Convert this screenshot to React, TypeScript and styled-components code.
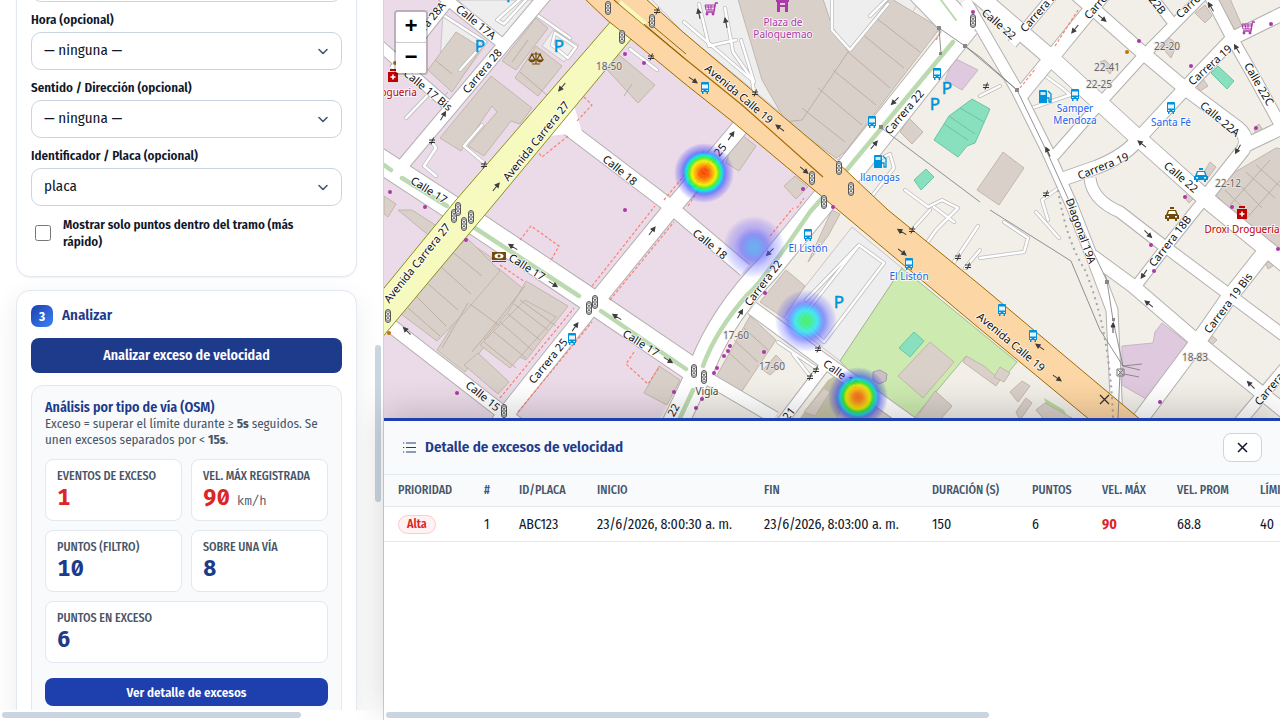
import React, { useState } from 'react';
import styled, { createGlobalStyle } from 'styled-components';

const SANS = '"Fira Sans Condensed", Lato, "Noto Sans", sans-serif';
const MONO = '"Fira Code", "Fira Mono", "DejaVu Sans Mono", "Liberation Mono", monospace';

const GlobalStyle = createGlobalStyle`
  *, *::before, *::after { box-sizing: border-box; }
  body { margin: 0; font-family: ${SANS}; color: #0f172a; background: #fff; overflow: hidden; }
  button, select, input { font-family: inherit; }
`;

/* ---------- Shell ---------- */
const Shell = styled.div`
  display: grid;
  grid-template-columns: 30% minmax(0, 1fr);
  height: 100vh;
`;
const Sidebar = styled.aside`
  display: grid;
  grid-template-columns: minmax(0, 1fr) 10px;
  grid-template-rows: minmax(0, 1fr) 10px;
  min-height: 0;
  border-right: 1px solid #cbd5e1;
`;
const SidebarScroll = styled.div`
  grid-area: 1 / 1 / 2 / 3;
  min-height: 0;
  overflow: hidden;
  padding: 0 26px 0 16px;
  display: flex;
  flex-direction: column;
  gap: 13px;
`;
const VTrack = styled.div`
  grid-area: 1 / 2 / 2 / 3;
  z-index: 1;
  padding: 345px 2px 0;
`;
const HTrack = styled.div`
  grid-area: 2 / 1 / 3 / 3;
  padding: 2px;
`;
const Thumb = styled.div<{ $w?: string; $h: string }>`
  width: ${(p) => p.$w ?? '100%'};
  height: ${(p) => p.$h};
  border-radius: 3px;
  background: #cbd5e1;
`;

/* ---------- Cards and form ---------- */
const Card = styled.section<{ $scrolled?: boolean }>`
  flex: none;
  margin-top: ${(p) => (p.$scrolled ? '-51px' : '0')};
  padding: 14px;
  border: 1px solid #e2e8f0;
  border-radius: 14px;
  background: #fff;
  box-shadow: ${(p) => (p.$scrolled ? '0 1px 2px rgba(15, 23, 42, 0.05)' : '0 8px 28px rgba(15, 23, 42, 0.08)')};
`;
const Field = styled.div`
  display: flex;
  flex-direction: column;
  gap: 4px;
  margin-bottom: 10px;
`;
const FieldLabel = styled.label`
  font-size: 13px;
  font-weight: 600;
  line-height: 16px;
`;
const SelectBox = styled.div`
  display: grid;
  align-items: center;
  & > * { grid-area: 1 / 1; }
  svg { justify-self: end; margin-right: 13px; pointer-events: none; }
`;
const Select = styled.select`
  appearance: none;
  width: 100%;
  height: 38px;
  padding: 0 34px 2px 12px;
  border: 1px solid #cbd5e1;
  border-radius: 10px;
  background: #fff;
  color: #0f172a;
  font-size: 15px;
`;
const CheckRow = styled.label`
  display: flex;
  align-items: center;
  gap: 12px;
  padding: 0 12px 12px 4px;
  font-size: 13px;
  font-weight: 600;
  line-height: 17px;
`;
const Checkbox = styled.input`
  flex: none;
  width: 16px;
  height: 16px;
  margin: 0;
`;
const StepHeader = styled.header`
  display: flex;
  align-items: center;
  gap: 9px;
  margin-bottom: 11px;
`;
const StepBadge = styled.span`
  display: grid;
  place-items: center;
  width: 22px;
  height: 22px;
  border-radius: 7px;
  background: linear-gradient(135deg, #1e40af, #3b82f6);
  color: #fff;
  font-size: 13px;
  font-weight: 700;
`;
const StepTitle = styled.h2`
  margin: 0;
  padding-bottom: 2px;
  color: #1e3a8a;
  font-size: 15px;
  font-weight: 600;
  line-height: 20px;
`;
const PrimaryButton = styled.button<{ $small?: boolean }>`
  display: block;
  width: 100%;
  height: ${(p) => (p.$small ? '28px' : '35px')};
  padding: 0;
  border: 0;
  border-radius: 8px;
  background: ${(p) => (p.$small ? '#1e40af' : '#1e3a8a')};
  color: #fff;
  font-size: ${(p) => (p.$small ? '13px' : '14px')};
  font-weight: 600;
`;

/* ---------- Analysis ---------- */
const Analysis = styled.div`
  margin-top: 12px;
  padding: 13px 13px 24px;
  border: 1px solid #e2e8f0;
  border-radius: 12px;
  background: #f8fafc;
`;
const AnalysisTitle = styled.h3`
  margin: 0;
  color: #1e3a8a;
  font-size: 14px;
  font-weight: 600;
  line-height: 17px;
`;
const AnalysisText = styled.p`
  margin: 0 0 11px;
  color: #475569;
  font-size: 13px;
  line-height: 16px;
`;
const Stats = styled.dl`
  display: grid;
  grid-template-columns: 1fr 1fr;
  gap: 9px;
  margin: 0 0 15px;
`;
const Stat = styled.div<{ $wide?: boolean }>`
  grid-column: ${(p) => (p.$wide ? '1 / -1' : 'auto')};
  height: 62px;
  padding: 8px 11px;
  border: 1px solid #e2e8f0;
  border-radius: 8px;
  background: #fff;
`;
const StatName = styled.dt`
  color: #475569;
  font-size: 12px;
  font-weight: 500;
  line-height: 16px;
  white-space: nowrap;
`;
const StatValue = styled.dd<{ $alert?: boolean }>`
  margin: 0;
  color: ${(p) => (p.$alert ? '#dc2626' : '#1e3a8a')};
  font-family: ${MONO};
  font-size: 22px;
  font-weight: 700;
  line-height: 29px;
`;
const Unit = styled.small`
  margin-left: 7px;
  color: #475569;
  font-size: 12px;
  font-weight: 400;
`;

/* ---------- Map ---------- */
const Main = styled.main`
  display: grid;
  grid-template-columns: minmax(0, 1fr);
  grid-template-rows: minmax(0, 1fr) 302px;
  min-width: 0;
  min-height: 0;
`;
const MapPane = styled.div`
  position: relative;
  overflow: hidden;
  background: #f2efe9;
`;
const MapSvg = styled.svg`
  display: block;
  width: 100%;
  height: 100%;
  font-family: "Noto Sans", sans-serif;
`;
const ZoomControl = styled.div`
  position: absolute;
  top: 10px;
  left: 10px;
  display: flex;
  flex-direction: column;
  border: 2px solid rgba(0, 0, 0, 0.2);
  border-radius: 4px;
  background-clip: padding-box;
`;
const ZoomButton = styled.button`
  width: 30px;
  height: 30px;
  padding: 2px 0 0;
  border: 0;
  border-radius: 2px;
  background: #fff;
  color: #000;
  font: bold 22px/28px "Liberation Mono", monospace;
  & + & { height: 31px; border-top: 1px solid #ccc; border-radius: 0 0 2px 2px; }
`;

/* ---------- Detail panel ---------- */
const Panel = styled.section`
  position: relative;
  z-index: 2;
  display: flex;
  flex-direction: column;
  min-width: 0;
  border-top: 3px solid #1e40af;
  background: #fff;
  box-shadow: 0 -8px 32px rgba(0, 0, 0, 0.18);
`;
const PanelHeader = styled.header`
  display: flex;
  align-items: center;
  gap: 8px;
  height: 54px;
  flex: none;
  padding: 0 18px;
  border-bottom: 1px solid #e2e8f0;
  background: #f8fafc;
  color: #1e3a8a;
`;
const PanelTitle = styled.h2`
  flex: 1;
  margin: 0;
  padding-bottom: 2px;
  font-size: 15px;
  font-weight: 600;
`;
const CloseButton = styled.button`
  display: grid;
  place-items: center;
  width: 39px;
  height: 29px;
  padding: 0;
  border: 1px solid #cbd5e1;
  border-radius: 8px;
  background: #fff;
  color: #0f172a;
`;
const TableScroll = styled.div`
  flex: 1;
  min-height: 0;
  overflow: hidden;
`;
const Table = styled.table`
  table-layout: fixed;
  width: 1333px;
  border-collapse: separate;
  border-spacing: 0;
  text-align: left;
  white-space: nowrap;
`;
const Th = styled.th<{ $w?: number }>`
  width: ${(p) => (p.$w ? p.$w + 'px' : 'auto')};
  height: 32px;
  padding: 0 0 1px 14px;
  border-bottom: 1px solid #e2e8f0;
  background: #f8fafc;
  color: #475569;
  font-size: 12px;
  font-weight: 500;
`;
const Td = styled.td<{ $alert?: boolean }>`
  height: 35px;
  padding: 0 0 0 14px;
  border-bottom: 1px solid #e2e8f0;
  color: ${(p) => (p.$alert ? '#dc2626' : '#0f172a')};
  font-size: 14px;
  font-weight: ${(p) => (p.$alert ? 700 : 400)};
`;
const Pill = styled.span`
  display: inline-block;
  padding: 0 8px;
  border: 1px solid #fecaca;
  border-radius: 10px;
  background: #fef2f2;
  color: #dc2626;
  font-size: 12px;
  font-weight: 600;
  line-height: 17px;
`;

/* ---------- Map data ---------- */
type Road = { d: string; w: number };
const roads: Road[] = [
  { d: 'M550-10L402 166', w: 14 },
  { d: 'M440-6L500 42', w: 12 },
  { d: 'M454-6L394 70', w: 12 },
  { d: 'M378 44L451 108', w: 12 },
  { d: 'M376 158L451 207L584 296L693 370', w: 25 },
  { d: 'M693 370L775 418', w: 14 },
  { d: 'M562 124L666 203L745 270', w: 15 },
  { d: 'M752 308L820 358L912 424', w: 15 },
  { d: 'M498 424L592 306L667 214L742 125', w: 18 },
  { d: 'M966 24L845 176', w: 30 },
  { d: 'M832 190L768 268Q722 315 702 367L672 430', w: 27 },
  { d: 'M386 322L520 426', w: 15 },
  { d: 'M826 364L782 422', w: 12 },
  { d: 'M972-10L1050 57L1137 137L1213 205L1290 268', w: 18 },
  { d: 'M920-14L968 36', w: 34 },
  { d: 'M965 0L1017 90L1047 150L1072 206L1092 257L1112 310L1117 420', w: 13 },
  { d: 'M1054-6L1012 44', w: 11 },
  { d: 'M1110-14L1048 62L1020 96', w: 16 },
  { d: 'M1074-8L1143 53L1187 90L1238 128Q1250 138 1243 150L1208 194', w: 15 },
  { d: 'M1212-14L1143 56L1103 100L1054 156', w: 12 },
  { d: 'M1144-14L1172 22', w: 11 },
  { d: 'M1286 12L1233 38L1193 80L1140 137Q1127 155 1097 167L1060 180', w: 15 },
  { d: 'M1208-8L1233 40L1257 82L1282 128', w: 13 },
  { d: 'M1244 146L1290 124', w: 15 },
  { d: 'M1210 192L1170 242L1133 290', w: 12 },
  { d: 'M1090 178Q1092 200 1120 212L1160 243L1227 293L1290 340', w: 13 },
  { d: 'M1092 256L1133 286L1197 341L1290 416', w: 15 },
  { d: 'M1268 248L1227 300L1197 343L1138 422', w: 17 },
  { d: 'M1290 362L1238 424', w: 13 },
];
/* Driveways and service lanes */
const lanes = [
  'M406 118L428 95', 'M537 15L570 38M555 33L576 47L568 58L552 45Z', 'M432 142L436 148L424 166L436 176',
  'M482 125L464 146L483 162', 'M497 20L526-6M504 24L544-20M497 20L504 24',
  'M443 15L485 42L460 70', 'M630 49L657 70', 'M684 22L752 80L754 92', 'M699 4L709 46L736 40M725 8L733 52L754 82M741 40L754 82',
  'M832 0L832 30L850 50L888 4', 'M870 16L896-10',
  'M806 300L859 245L884 263L824 342L800 320L859 245', 'M778 342L819 370M793 354L810 376', 'M872 196L894 168L890 154L878 160', 
  'M905 190L928 207L942 200L958 208L936 230L915 260', 'M934 207L954 222', 'M1044 75L1062 88L1070 95L1032 108', 'M1000 86L980 96',
  'M1036 212L1059 238M980 258L1024 252L1028 238L1004 222', 'M912 230L930 210M954 262L978 226M965 268L980 250', 'M1064 184L1042 200L1048 220',
];
const footways = [
  'M584 97L592 105L576 122M568 136L542 157L538 152', 'M664 200L705 150', 'M520 240L531 226L559 246L550 262', 'M500 265L525 282',
  'M592 286L655 206', 'M610 300L674 222', 'M500 398L574 308', 'M518 412L592 322', 'M634 352L626 364L648 384L660 366', 'M688 206L714 166', 'M770 236L793 208',
  'M936 40L940 34', 'M1055 46L1078 10', 'M1020 88L1036 68', 'M797 208L804 198',
];
/* Building footprints */
const buildings = [
  'M536 18L548 28L516 70L502 61Z', 'M536 46L562 66L538 96L515 78Z', 'M456 32L482 48L452 92L428 70Z', 'M491 76L532 108L520 124L511 121L484 156L468 146L497 112L492 106L461 151L440 138Z',
  'M600 62L618 54L655 85L638 103Z', 'M737-4L822-4L832 26L848 52L890-2L940 28L845 152L836 158L786 122L762 80Z', 'M732 144L742 135L756 146L739 171L726 163Z', 'M784 186L795 176L808 187L796 199Z', 'M900 132L909 118L923 132L912 144Z',
  'M466 240L492 258L482 268L459 248ZM486 275L498 268L526 291L509 314L465 372L437 350L467 303Z', 'M467 238L500 271L465 312L437 341L401 314L455 250Z', 'M526 281L568 306L526 360L484 340L508 312Z', 'M480 345L525 300L556 317L510 368Z', 'M464 365L478 353L509 382L498 394Z', 'M398 210L412 210L440 228L432 238Z', 'M384 196L396 204L388 217L384 214Z',
  'M659 366L680 380L667 405L644 393Z', 'M786 270L805 286L784 318L760 302Z', 'M750 316L776 340L740 394L716 377Z', 'M776 355L784 363L770 375L763 370Z', 'M808 262L828 236L840 214L832 210Z', 'M898 376L930 342L954 362L923 398Z', 'M916 418L935 391L952 406L940 420Z', 'M804 412L824 388L830 392L815 416Z', 'M837 418L852 385L892 414L888 424Z', 'M966 356L984 366L1000 380L996 386L963 362Z', 'M1000 367L1010 373L1004 382L994 377Z', 'M1003 152L1024 168L999 205L977 190Z', 'M1165 35L1177 44L1171 58L1160 45Z', 'M1195 13L1205 5L1212 16L1205 23Z', 'M1218 0L1228-6L1242 26L1235 30Z', 'M1215 193L1230 175L1276 148L1290 150L1290 248L1278 250L1225 205Z', 'M1202 175L1210 162L1216 167L1208 178Z', 'M1010 392L1022 381L1030 386L1018 402Z', 'M1036 410L1045 403L1072 418L1048 424Z', 'M1016 412L1026 398L1032 403L1020 420Z', 'M1206 340L1211 335L1217 340L1211 346Z', 'M1264 260L1272 258L1276 264L1268 269Z', 'M1100 62L1105 60L1113 68L1110 74Z', 'M1184 197L1188 193L1194 198L1189 203Z', 'M1254 128L1259 124L1264 132L1256 136Z', 'M1196 84L1203 79L1208 86L1200 91Z',
];
const buildingLines = 'M435 60L452 74M448 92L437 103M450 250L482 276M440 266L471 294M426 282L458 310M416 296L446 326M408 308L440 336M470 304L500 326M442 348L468 303M525 286L500 318L472 352M520 300L556 326M514 304L548 330M508 314L540 340M500 322L532 350M494 332L526 358M484 342L516 368M802 120L848 52M833 70L876 105M818 88L862 125M802 108L845 142M848 52L890 88M862 34L904 68M876 18L920 52M765 124L802 120M744 328L768 350M734 340L758 362M726 350L750 372M1225 190L1250 215M1235 180L1262 208M1246 172L1275 198M1256 165L1282 188M1230 205L1270 160M1245 220L1285 175M624 96L632 84M512 62L528 40M520 72L548 96';

type Label = { x: number; y: number; r: number; t: string };
const streetLabels: Label[] = [
  { x: 536, y: 141, r: -51, t: 'Avenida Carrera 27' }, { x: 417, y: 263, r: -51, t: 'Avenida Carrera 27' },
  { x: 739, y: 94, r: 40, t: 'Avenida Calle 19' }, { x: 1011, y: 342, r: 40, t: 'Avenida Calle 19' },
  { x: 476, y: 22, r: 39, t: 'Calle 17A' }, { x: 428, y: 90, r: 39, t: 'Calle 17 Bis' },
  { x: 424, y: 27, r: -51, t: 'Carrera 28A' }, { x: 482, y: 71, r: -50, t: 'Carrera 28' },
  { x: 429, y: 190, r: 32, t: 'Calle 17' }, { x: 527, y: 267, r: 32, t: 'Calle 17' }, { x: 641, y: 343, r: 32, t: 'Calle 17' },
  { x: 620, y: 170, r: 39, t: 'Calle 18' }, { x: 710, y: 244, r: 39, t: 'Calle 18' }, { x: 841, y: 374, r: 36, t: 'Calle 18' },
  { x: 707, y: 166, r: -51, t: 'Carrera 25' }, { x: 548, y: 361, r: -51, t: 'Carrera 25' },
  { x: 904, y: 112, r: -50, t: 'Carrera 22' }, { x: 763, y: 283, r: -53, t: 'Carrera 22' },
  { x: 483, y: 396, r: 39, t: 'Calle 15' }, { x: 663, y: 428, r: -60, t: 'Carrera 22' }, { x: 776, y: 430, r: -52, t: 'Carrera 21' },
  { x: 999, y: 24, r: 41, t: 'Calle 22' }, { x: 1181, y: 177, r: 41, t: 'Calle 22' }, { x: 1220, y: 119, r: 40, t: 'Calle 22A' },
  { x: 1259, y: 84, r: 60, t: 'Calle 22C' }, { x: 1149, y: -6, r: 52, t: 'Calle 22B' },
  { x: 1103, y: 166, r: -22, t: 'Carrera 19' }, { x: 1210, y: 65, r: -42, t: 'Carrera 19' },
  { x: 1040, y: 10, r: -49, t: 'Carrera 21' }, { x: 1104, y: -3, r: -49, t: 'Carrera 20' }, { x: 1200, y: -5, r: -43, t: 'Carrera 19A' },
  { x: 1081, y: 231, r: 70, t: 'Diagonal 19A' }, { x: 1170, y: 241, r: -52, t: 'Carrera 18B' }, { x: 1228, y: 303, r: -53, t: 'Carrera 19 Bis' },
  { x: 1274, y: 383, r: -50, t: 'Carrera 18' },
];
const houseNumbers: Label[] = [
  { x: 609, y: 66, r: 0, t: '18-50' }, { x: 1167, y: 46, r: 0, t: '22-20' }, { x: 1107, y: 67, r: 0, t: '22-41' }, { x: 1099, y: 84, r: 0, t: '22-25' },
  { x: 1228, y: 183, r: 0, t: '22-12' }, { x: 736, y: 335, r: 0, t: '17-60' }, { x: 772, y: 366, r: 0, t: '17-60' }, { x: 1195, y: 357, r: 0, t: '18-83' },
];
const arrows: [number, number, number][] = [
  [562, 87, 130], [496, 187, -51], [443, 116, -60], [513, 247, 212], [553, 284, 32], [617, 317, 212], [668, 360, 32], [693, 80, 35], [780, 128, 217], [804, 170, 40],
  [731, 136, -55], [895, 101, 135], [874, 145, -50], [407, 331, 225], [575, 327, -55], [652, 231, -52], [770, 252, 135], [740, 314, -60], [902, 232, 212], [902, 252, 38],
  [1075, 29, 130], [1102, 18, 40], [1211, 7, 240], [1237, 49, 240], [1142, 144, 218], [1238, 149, 120], [1048, 152, 245], [1148, 234, 45], [1144, 274, 125], [1149, 304, 218], [1113, 328, 270],
  [1040, 347, 215], [1057, 378, 35], [1251, 385, 225], [699, 14, 258], [726, 23, 258],
];
const signals: [number, number][] = [
  [608, 8], [652, 21], [622, 37], [454, 216], [464, 224], [471, 217], [388, 316], [589, 308], [595, 302], [504, 411], [812, 178], [839, 168], [851, 189], [824, 202], [973, 21], [694, 371], [704, 377], [458, 209],
];
const buses: [number, number][] = [
  [705, 88], [872, 122], [937, 74], [1075, 95], [1171, 108], [808, 235], [909, 264], [1002, 310], [1033, 336], [572, 339],
];
const gates: [number, number][] = [
  [432, 141], [484, 165], [657, 11], [651, 57], [755, 93], [912, 230], [958, 257], [968, 266], [986, 86], [1046, 194], [818, 349], [816, 370], [810, 377],
];
const shops: [number, number][] = [
  [625, 54], [644, 63], [390, 192], [425, 207], [625, 210], [466, 240], [457, 393], [674, 392], [803, 189], [833, 207], [765, 293], [764, 352], [730, 346], [728, 351], [724, 356], [717, 368], [714, 373], [702, 399], [696, 408],
  [973, 12], [1139, 41], [1191, 66], [1271, 24], [1256, 128], [1185, 197], [1232, 207], [1151, 245], [1154, 271], [1160, 402], [1278, 249],
];
const parkings: [number, number][] = [[480, 46], [559, 46], [947, 88], [935, 104], [839, 302], [511, -4]];
const poiLabels: Label[] = [
  { x: 880, y: 177, r: 0, t: 'llanogas' }, { x: 1075, y: 108, r: 0, t: 'Samper' }, { x: 1075, y: 120, r: 0, t: 'Mendoza' }, { x: 1171, y: 122, r: 0, t: 'Santa Fé' },
  { x: 808, y: 248, r: 0, t: 'El Listón' }, { x: 909, y: 276, r: 0, t: 'El Listón' },
];
const heat = [
  { x: 704, y: 173, r: 30, level: 'hot' }, { x: 754, y: 247, r: 31, level: 'low' }, { x: 806, y: 321, r: 31, level: 'mid' }, { x: 858, y: 397, r: 30, level: 'warm' },
];

const Halo = ({ items, fill, size = 10, halo = '#fff' }: { items: Label[]; fill: string; size?: number; halo?: string }) => (
  <g fontSize={size} fill={fill} stroke={halo} strokeOpacity={0.75} strokeWidth={2} strokeLinejoin="round" paintOrder="stroke" textAnchor="middle">
    {items.map((l, i) => (
      <text key={i} transform={`translate(${l.x} ${l.y}) rotate(${l.r})`} dy="4">{l.t}</text>
    ))}
  </g>
);

const Cart = ({ x, y }: { x: number; y: number }) => (
  <g transform={`translate(${x} ${y})`} fill="none" stroke="#ac39ac" strokeWidth="1.3">
    <path d="M7-6H4.5L3 3H-5" /><path d="M-6-4H4L3 1H-5ZM-3-4L-2 1M0-4V1M-6-2H4" strokeWidth="1" />
    <circle cx="-4" cy="5" r=".8" /><circle cx="2" cy="5" r=".8" />
  </g>
);
const Pump = ({ x, y }: { x: number; y: number }) => (
  <g transform={`translate(${x} ${y})`}>
    <path d="M-6-6Q-6-7-5-7H1Q2-7 2-6V6H-6Z" fill="#0092da" /><path d="M-4.500-5H.5V-2H-4.500Z" fill="#cde8f5" />
    <path d="M2 1H4V5H6V-3L3-6" fill="none" stroke="#0092da" strokeWidth="1.300" />
  </g>
);
const Pharmacy = ({ x, y }: { x: number; y: number }) => (
  <g transform={`translate(${x} ${y})`}>
    <path d="M-3-7H3V-5H-3ZM-5-4H5V6H-5Z" fill="#bf0000" /><path d="M-2.500 1H2.500M0-1.500V3.500" stroke="#fff" strokeWidth="1.600" />
  </g>
);
const Car = ({ x, y, c }: { x: number; y: number; c: string }) => (
  <g transform={`translate(${x} ${y})`}>
    <path d="M-2-7H2V-5H-2ZM-4-4H4L6 1H7V5H5V7H3V5H-3V7H-5V5H-7V1H-6Z" fill={c} /><path d="M-3-3H3L4 0H-4ZM-5 2H-3V3.500H-5ZM3 2H5V3.500H3Z" fill="#fff" />
  </g>
);

function CityMap() {
  return (
    <MapSvg viewBox="384 0 896 418" preserveAspectRatio="xMinYMin slice" role="img" aria-label="Mapa de calor de excesos de velocidad">
      <defs>
        <radialGradient id="hot">
          <stop offset="0" stopColor="#ff4000" /><stop offset=".15" stopColor="#ff5a00" /><stop offset=".3" stopColor="#ffb000" /><stop offset=".4" stopColor="#f8f000" />
          <stop offset=".5" stopColor="#50f020" /><stop offset=".6" stopColor="#00e8e8" /><stop offset=".69" stopColor="#3a6cff" stopOpacity=".8" /><stop offset=".8" stopColor="#3c2cff" stopOpacity=".4" /><stop offset="1" stopColor="#00f" stopOpacity="0" />
        </radialGradient>
        <radialGradient id="warm">
          <stop offset="0" stopColor="#f56a10" /><stop offset=".15" stopColor="#f88010" /><stop offset=".3" stopColor="#f7c00a" /><stop offset=".4" stopColor="#e0e800" />
          <stop offset=".5" stopColor="#30e030" /><stop offset=".6" stopColor="#10d0e8" /><stop offset=".69" stopColor="#3060f0" stopOpacity=".75" /><stop offset=".8" stopColor="#3030e0" stopOpacity=".4" /><stop offset="1" stopColor="#00f" stopOpacity="0" />
        </radialGradient>
        <radialGradient id="mid">
          <stop offset="0" stopColor="#40f070" /><stop offset=".15" stopColor="#40f080" /><stop offset=".35" stopColor="#30e8f0" stopOpacity=".95" /><stop offset=".48" stopColor="#40a8ff" stopOpacity=".85" />
          <stop offset=".6" stopColor="#4050ff" stopOpacity=".6" /><stop offset=".78" stopColor="#4040ff" stopOpacity=".28" /><stop offset="1" stopColor="#00f" stopOpacity="0" />
        </radialGradient>
        <radialGradient id="low">
          <stop offset="0" stopColor="#5cacf0" stopOpacity=".95" /><stop offset=".25" stopColor="#6098f4" stopOpacity=".9" /><stop offset=".42" stopColor="#5a60fa" stopOpacity=".65" /><stop offset=".65" stopColor="#5050ff" stopOpacity=".32" /><stop offset="1" stopColor="#00f" stopOpacity="0" />
        </radialGradient>
        <g id="signal" fill="#f4f4f4" stroke="#444" strokeWidth=".9"><rect x="-2.500" y="-6.500" width="5" height="13" rx="2.500" /><circle cy="-3.700" r="1.400" strokeWidth=".7" /><circle r="1.400" strokeWidth=".7" /><circle cy="3.700" r="1.400" strokeWidth=".7" /></g>
        <g id="bus"><path d="M-4-5Q-4-6-3-6H3Q4-6 4-5V4H3V6H1.500V4H-1.500V6H-3V4H-4Z" fill="#0092da" /><path d="M-3-3.500H3V.5H-3Z" fill="#e8f4fb" /><path d="M-3 2.500H-1.500M1.500 2.500H3" stroke="#fff" /></g>
        <path id="arrow" d="M-5 0H2M1-2L5 0L1 2Z" stroke="#3c3c3c" strokeWidth="1" fill="#3c3c3c" />
        <path id="gate" d="M-3-1H3M-3 1.500H3M-1 3.500L1.500-3.500" stroke="#333" strokeWidth="1" />
      </defs>

      <rect x="384" y="0" width="896" height="418" fill="#f2efe9" />
      <path d="M384 0H600L837 180L690 365L660 418H384Z" fill="#ebdbe8" />
      <path d="M650-2H920L838 160L684 33ZM476 0H545L500 40L458 0ZM443 14L488 42L464 74L440 60ZM553 30L579 45L564 62L542 46Z" fill="#eee" stroke="#cbc5c9" />
      <path d="M852 227L902 268L840 361L782 316Z" fill="#eee" stroke="#d3bfc3" />
      <path d="M902 268L1017 362L1008 373L993 377L966 356L914 418H892L840 361Z" fill="#cdebb0" stroke="#a6bb94" />
      <path d="M846 370L828 380L800 418H894Z" fill="#c4c3a8" />
      <path d="M1044 398L1064 410L1068 418H1050Z" fill="#b5d99c" />
      <path d="M1122 346L1153 343L1155 332L1162 323L1189 344L1146 399L1122 385ZM954 58L978 70L962 90L945 80Z" fill="#dfc9de" stroke="#c9b3c8" />
      <g fill="#d9d0c9" stroke="#c4b6ab">{buildings.map((d) => <path key={d} d={d} />)}</g>
      <path d={buildingLines} fill="none" stroke="#bfafa4" />
      <path d="M934 140L949 116L972 99L990 109L975 143L967 146L958 157ZM944 124L968 140M949 116L975 134M960 108L984 122M914 180L926 169L934 177L921 190ZM1211 73L1218 66L1234 81L1227 89ZM899 348L914 332L924 341L910 357Z" fill="#88e0be" stroke="#6cc5a2" />
      <path d="M873 372L880 370L887 374L886 381L879 384L873 380Z" fill="#c9c1c4" stroke="#ac9aab" />

      <g fill="none" strokeLinecap="round" strokeLinejoin="round">
        {lanes.map((d) => <path key={d} d={d} stroke="#bdbdbd" strokeWidth="4" />)}
        {lanes.map((d) => <path key={d} d={d} stroke="#fff" strokeWidth="2.500" />)}
      </g>
      <g fill="none" strokeLinejoin="round">
        {roads.map((r) => <path key={r.d} d={r.d} stroke="#b3b0b0" strokeWidth={r.w} />)}
        {roads.map((r) => <path key={r.d} d={r.d} stroke="#fff" strokeWidth={r.w - 2} />)}
      </g>
      <path d="M549 136L568 134L584 138L574 106Z" fill="#fff" />
      <g fill="none" stroke="#fa8072" strokeWidth="1.200" strokeDasharray="3 2">{footways.map((d) => <path key={d} d={d} />)}</g>
      <g fill="none" stroke="#bcdab0" strokeWidth="4.500" strokeLinecap="round">
        <path d="M384 165L391 170M402 178L447 206M475 228L579 296M601 311L686 369M953 42L845 172M824 196L810 212Q760 285 748 294Q716 330 703 366M693 390L680 418" />
        <path d="M938-4L956 20" strokeWidth="2" />
      </g>
      <path d="M380 293L456 200L612 20L650 25L632 38L489 210L380 340Z" fill="#f7fabf" stroke="#8a8f20" />
      <path d="M585-1L607 20L632 40L684 83L733 122L838 210L980 329L1090 420H1141L980 285L888 210L837 162L684 33L646-1Z" fill="#fcd6a4" stroke="#a06b00" />
      <path d="M614 0L684 58L742 105L823 177" fill="none" stroke="#a06b00" strokeWidth="1.100" />
      <path d="M620 2L646 24" stroke="#f7fabf" strokeWidth="4" /><path d="M644 24L684 58M648 22L686 54" stroke="#8a6a10" />
      <g fill="none" stroke="#777" strokeWidth=".8">
        <path d="M939 28L941 54M939 28L965 46L1017 90M880 127L892 136L980 202M965 46L980 57L1017 90L1047 152L1071 205L1107 281L1113 320L1123 366L1142 364M1123 366L1140 370M1124 374L1139 377M990 210L1071 261L1100 330L1123 366M1120 372L1118 418" />
      </g>
      <g fill="#888"><path d="M937 26h4v4h-4zM939 52h3v3h-3zM963 44h4v4h-4zM1015 88h4v4h-4zM1069 203h4v4h-4zM1105 280h4v4h-4zM1112 318h3v3h-3zM879 125h4v4h-4z" /></g>
      <path d="M1058 190Q1066 240 1085 270Q1110 330 1113 418" fill="none" stroke="#a5a5a5" strokeWidth="2" strokeDasharray="2 4" />
      <path d="M1117 369h7v7h-7zM1118 370l5 5M1123 370l-5 5" fill="none" stroke="#777" /><path d="M1100 395l9 9M1109 395l-9 9" stroke="#333" strokeWidth="1.300" />

      {arrows.map(([x, y, r], i) => <use key={i} href="#arrow" transform={`translate(${x} ${y}) rotate(${r})`} />)}
      {gates.map(([x, y], i) => <use key={i} href="#gate" x={x} y={y} />)}
      <g fill="#ac39ac">{shops.map(([x, y], i) => <circle key={i} cx={x} cy={y} r="2" />)}</g>
      <g fill="#c77400"><circle cx="395" cy="63" r="2" /><circle cx="389" cy="333" r="2" /><circle cx="1127" cy="52" r="2" /></g>

      <Halo items={streetLabels} fill="#111" size={11} />
      <Halo items={houseNumbers} fill="#666" halo="#eee8e4" />
      <Halo items={poiLabels} fill="#1a66ee" />
      <Halo items={[{ x: 783, y: 22, r: 0, t: 'Plaza de' }, { x: 783, y: 34, r: 0, t: 'Paloquemao' }]} fill="#ac39ac" />
      <Halo items={[{ x: 393, y: 92, r: 0, t: 'Drogueria' }, { x: 1242, y: 229, r: 0, t: 'Droxi Droguería' }]} fill="#bf0000" />
      <Halo items={[{ x: 707, y: 391, r: 0, t: 'Vigía' }]} fill="#444" />
      <g fontSize="17" fill="#0092da" stroke="#0092da" strokeWidth=".5" textAnchor="middle">{parkings.map(([x, y], i) => <text key={i} x={x} y={y + 6}>P</text>)}</g>

      {signals.map(([x, y], i) => <use key={i} href="#signal" x={x} y={y} />)}
      {buses.map(([x, y], i) => <use key={i} href="#bus" x={x} y={y} />)}
      <Cart x={711} y={9} /><Cart x={1248} y={28} />
      <Pump x={880} y={162} /><Pump x={1045} y={97} />
      <Pharmacy x={393} y={76} /><Pharmacy x={1242} y={213} />
      <Car x={1201} y={175} c="#0092da" /><Car x={1172} y={214} c="#734a08" />
      <path d="M776 0H789V2H788V12H785V7H780V12H777V2H776ZM780 3H785V5H780Z" fill="#ac39ac" fillRule="evenodd" />
      <g transform="translate(536 58)" fill="none" stroke="#734a08" strokeWidth="1.200"><path d="M0-6V6M-4 6H4M-5-4H5M-4-4L-7 2M-4-4L-1 2M4-4L1 2M4-4L7 2" /><path d="M-7 2Q-4 6-1 2ZM1 2Q4 6 7 2Z" fill="#734a08" /></g>
      <g transform="translate(499 256)"><path d="M-7-4H7V4H-7ZM-7 5H7V6H-7Z" fill="#734a08" /><ellipse rx="4.500" ry="2.500" fill="#fff" /><circle r="1.500" fill="#734a08" /></g>

      <g opacity=".93">{heat.map((h) => <circle key={h.level} cx={h.x} cy={h.y} r={h.r} fill={`url(#${h.level})`} />)}</g>
    </MapSvg>
  );
}

/* ---------- Sidebar parts ---------- */
function SelectField({ id, label, options }: { id: string; label: string; options: string[] }) {
  return (
    <Field>
      <FieldLabel htmlFor={id}>{label}</FieldLabel>
      <SelectBox>
        <Select id={id}>{options.map((o) => <option key={o}>{o}</option>)}</Select>
        <svg width="12" height="12" viewBox="0 0 12 12" fill="none" stroke="#475569" strokeWidth="1.600" strokeLinecap="round" strokeLinejoin="round"><path d="M2 4.500L6 8.500L10 4.500" /></svg>
      </SelectBox>
    </Field>
  );
}

const columns: { name: string; w?: number }[] = [
  { name: 'PRIORIDAD', w: 86 }, { name: '#', w: 35 }, { name: 'ID/PLACA', w: 78 }, { name: 'INICIO', w: 167 }, { name: 'FIN', w: 168 },
  { name: 'DURACIÓN (S)', w: 100 }, { name: 'PUNTOS', w: 70 }, { name: 'VEL. MÁX', w: 75 }, { name: 'VEL. PROM', w: 83 }, { name: 'LÍMITE' },
];

export default function App() {
  const [onlyInside, setOnlyInside] = useState(false);
  return (
    <>
      <GlobalStyle />
      <Shell>
        <Sidebar>
          <SidebarScroll>
            <Card $scrolled as="form">
              <Field>
                <SelectBox><Select aria-label="Fecha"><option>fecha</option></Select></SelectBox>
              </Field>
              <SelectField id="hora" label="Hora (opcional)" options={['— ninguna —']} />
              <SelectField id="sentido" label="Sentido / Dirección (opcional)" options={['— ninguna —']} />
              <SelectField id="placa" label="Identificador / Placa (opcional)" options={['placa']} />
              <CheckRow>
                <Checkbox type="checkbox" checked={onlyInside} onChange={(e) => setOnlyInside(e.target.checked)} />
                <span>Mostrar solo puntos dentro del tramo (más rápido)</span>
              </CheckRow>
            </Card>
            <Card>
              <StepHeader><StepBadge>3</StepBadge><StepTitle>Analizar</StepTitle></StepHeader>
              <PrimaryButton type="button">Analizar exceso de velocidad</PrimaryButton>
              <Analysis>
                <AnalysisTitle>Análisis por tipo de vía (OSM)</AnalysisTitle>
                <AnalysisText>Exceso = superar el límite durante ≥ <b>5s</b> seguidos. Se unen excesos separados por &lt; <b>15s</b>.</AnalysisText>
                <Stats>
                  <Stat><StatName>EVENTOS DE EXCESO</StatName><StatValue $alert>1</StatValue></Stat>
                  <Stat><StatName>VEL. MÁX REGISTRADA</StatName><StatValue $alert>90<Unit>km/h</Unit></StatValue></Stat>
                  <Stat><StatName>PUNTOS (FILTRO)</StatName><StatValue>10</StatValue></Stat>
                  <Stat><StatName>SOBRE UNA VÍA</StatName><StatValue>8</StatValue></Stat>
                  <Stat $wide><StatName>PUNTOS EN EXCESO</StatName><StatValue>6</StatValue></Stat>
                </Stats>
                <PrimaryButton type="button" $small>Ver detalle de excesos</PrimaryButton>
              </Analysis>
            </Card>
          </SidebarScroll>
          <VTrack><Thumb $h="157px" /></VTrack>
          <HTrack><Thumb $w="79%" $h="6px" /></HTrack>
        </Sidebar>
        <Main>
          <MapPane>
            <CityMap />
            <ZoomControl>
              <ZoomButton type="button" aria-label="Acercar">+</ZoomButton>
              <ZoomButton type="button" aria-label="Alejar">−</ZoomButton>
            </ZoomControl>
          </MapPane>
          <Panel>
            <PanelHeader>
              <svg width="15" height="15" viewBox="0 0 15 15" stroke="#1e3a8a" strokeWidth="1.200"><path d="M4 3H14M4 7.500H14M4 12H14M1 3H2.200M1 7.500H2.200M1 12H2.200" /></svg>
              <PanelTitle>Detalle de excesos de velocidad</PanelTitle>
              <CloseButton type="button" aria-label="Cerrar">
                <svg width="11" height="11" viewBox="0 0 11 11" stroke="currentColor" strokeWidth="1.500"><path d="M1 1L10 10M10 1L1 10" /></svg>
              </CloseButton>
            </PanelHeader>
            <TableScroll>
              <Table>
                <thead><tr>{columns.map((c) => <Th key={c.name} $w={c.w} scope="col">{c.name}</Th>)}</tr></thead>
                <tbody>
                  <tr>
                    <Td><Pill>Alta</Pill></Td><Td>1</Td><Td>ABC123</Td><Td>23/6/2026, 8:00:30 a. m.</Td><Td>23/6/2026, 8:03:00 a. m.</Td>
                    <Td>150</Td><Td>6</Td><Td $alert>90</Td><Td>68.8</Td><Td>40</Td>
                  </tr>
                </tbody>
              </Table>
            </TableScroll>
            <HTrack><Thumb $w="603px" $h="6px" /></HTrack>
          </Panel>
        </Main>
      </Shell>
    </>
  );
}
